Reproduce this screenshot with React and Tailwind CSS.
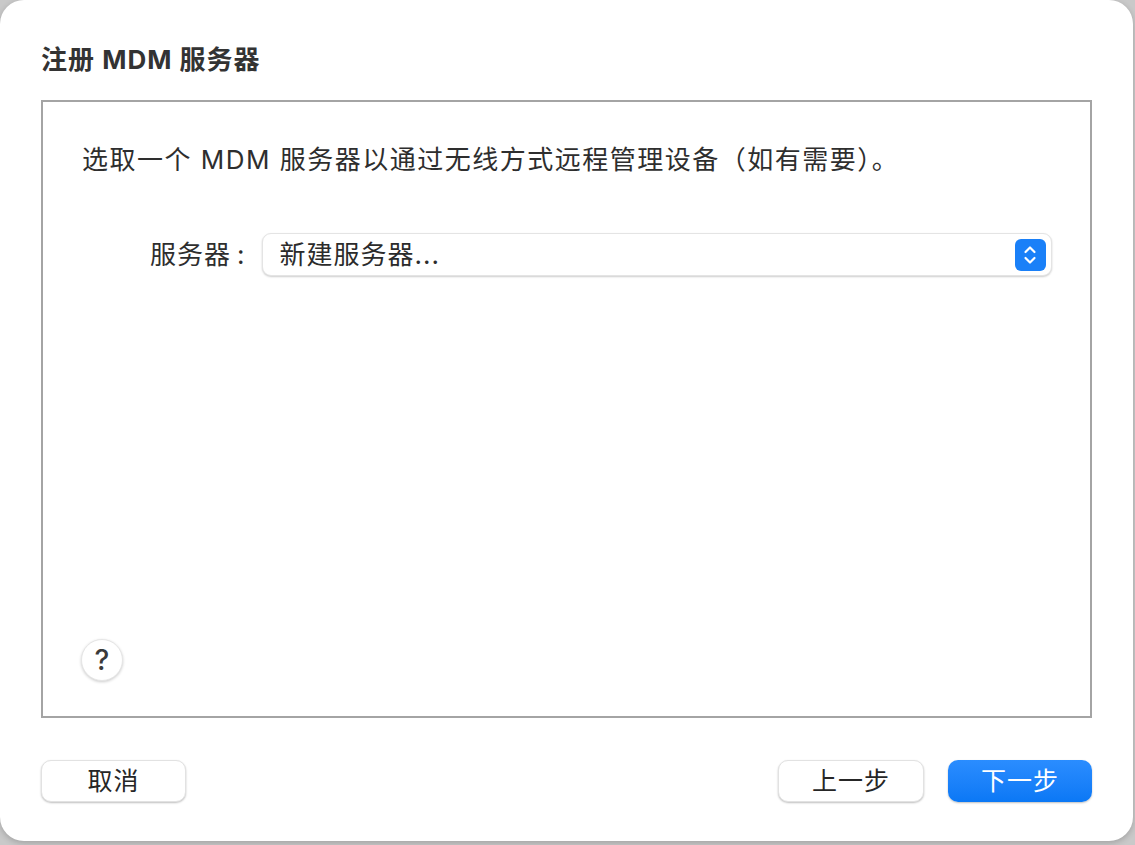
import React from 'react';

const FONT = { fontFamily: '"Inter", "Noto Sans CJK SC", "Noto Sans", sans-serif' };

const MacButton = ({ children, primary, width }) => (
  <button
    className={`h-[42px] rounded-[10px] text-[25px] leading-none tracking-[1px] flex items-center justify-center ${
      primary
        ? 'bg-gradient-to-b from-[#2a8dff] to-[#0a78f5] text-white shadow-[0_1px_2px_rgba(0,0,0,0.25)]'
        : 'bg-white text-[#262626] border border-[#e2e2e2] shadow-[0_1px_2px_rgba(0,0,0,0.25)]'
    } ${width}`}
  >
    {children}
  </button>
);

const Stepper = () => (
  <div className="w-[31px] h-[32px] rounded-[6px] bg-[#1a80f8] flex items-center justify-center">
    <svg width="14" height="22" viewBox="0 0 14 22" fill="none" stroke="white" strokeWidth="2.2" strokeLinecap="round" strokeLinejoin="round">
      <path d="M2.5 8 L7 3.5 L11.5 8" />
      <path d="M2.5 14 L7 18.5 L11.5 14" />
    </svg>
  </div>
);

export default function App() {
  return (
    <div className="w-[1135px] h-[845px] bg-[#c9c9c9] pr-[2px] pb-[4px]" style={FONT}>
      <div className="w-full h-full bg-white rounded-[24px] flex flex-col px-[41px] pt-[44px] pb-[39px] shadow-[0_2px_6px_rgba(0,0,0,0.2)]">
        {/* Title */}
        <h1 className="h-[32px] leading-[32px] text-[26px] font-bold text-[#333333] tracking-[1px]">
          注册 MDM 服务器
        </h1>

        {/* Content box */}
        <div className="mt-[24px] h-[618px] border-2 border-[#a4a4a4] flex flex-col pl-[39px] pr-[37px] pt-[42px] pb-[35px]">
          <p className="h-[32px] leading-[32px] text-[26px] text-[#2e2e2e] tracking-[1.5px] whitespace-nowrap">
            选取一个 MDM 服务器以通过无线方式远程管理设备（如有需要）。
          </p>

          <div className="mt-[57px] flex items-center">
            <span className="ml-[68px] text-[26px] text-[#2e2e2e] tracking-[1px] flex items-center">
              服务器<span className="ml-[6px]">:</span>
            </span>
            <div className="ml-[16px] w-[790px] h-[43px] rounded-[9px] bg-white border border-[#e4e4e4] shadow-[0_1px_2px_rgba(0,0,0,0.2)] flex items-center justify-between pl-[17px] pr-[5px]">
              <span className="text-[26px] text-[#2b2b2b] tracking-[1px]">新建服务器...</span>
              <Stepper />
            </div>
          </div>

          <div className="flex-1" />

          <button className="ml-[-1px] w-[42px] h-[42px] rounded-full bg-white border border-[#e6e6e6] shadow-[0_1px_3px_rgba(0,0,0,0.2)] flex items-center justify-center text-[28px] font-medium text-[#3a3a3a]">
            ?
          </button>
        </div>

        {/* Footer */}
        <div className="mt-[42px] flex items-center">
          <MacButton width="w-[145px]">取消</MacButton>
          <div className="flex-1" />
          <MacButton width="w-[146px]">上一步</MacButton>
          <div className="w-[24px]" />
          <MacButton primary width="w-[144px]">下一步</MacButton>
        </div>
      </div>
    </div>
  );
}
